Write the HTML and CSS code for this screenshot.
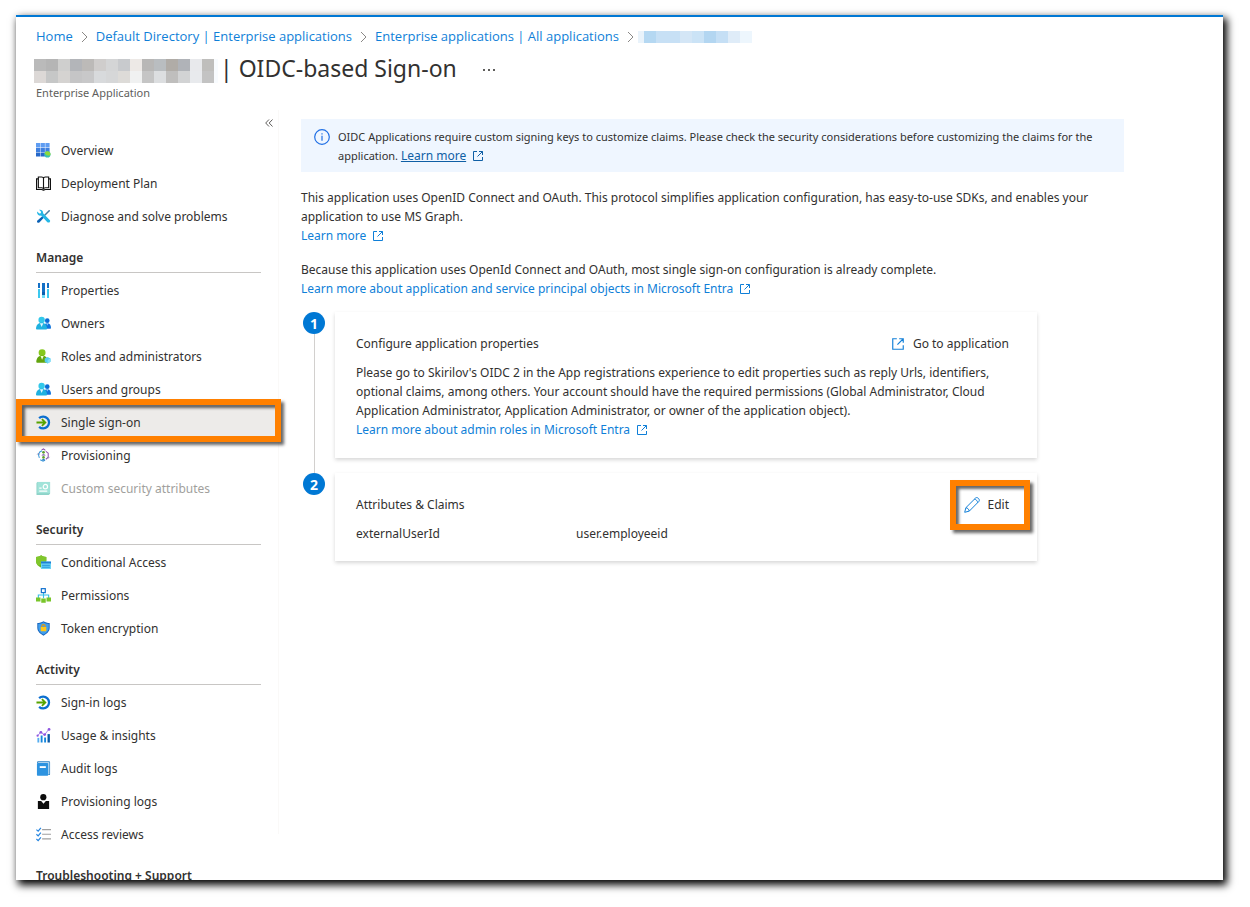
FILE: index.html
```html
<!DOCTYPE html>
<html lang="en">
<head>
  <meta charset="UTF-8">
  <meta name="viewport" content="width=device-width, initial-scale=1.0">
  <title>OIDC-based Sign-on</title>
  <link rel="stylesheet" href="styles.css">
</head>
<body>
  <!-- Shared icons -->
  <svg class="sprite" aria-hidden="true">
    <symbol id="icon-external" viewBox="0 0 12 12">
      <path d="M5 1.5H1.5v9h9V7M7 1.5h3.5V5M10.5 1.5L5.5 6.5" fill="none" stroke="currentColor"/>
    </symbol>
    <symbol id="icon-chevron" viewBox="0 0 7 12">
      <path d="M1 1l5 5-5 5" fill="none" stroke="currentColor"/>
    </symbol>
    <symbol id="icon-people" viewBox="0 0 16 16">
      <circle cx="12" cy="5" r="2.500" fill="#0a6cd6"/>
      <path d="M8 13.500c0-3.500 1.400-5.700 4-5.700s4 2.200 4 4.900c0 .5-.3.800-.8.800z" fill="#0f74de"/>
      <path d="M11 8l1 2.200L13 8z" fill="#9bd5ff"/>
      <circle cx="6" cy="4.200" r="3.400" fill="#32c8ea"/>
      <path d="M0 13.600C0 10 2.300 7.200 6 7.200s5.800 2.800 5.800 6.400c0 .5-.4.900-.9.900H.9c-.5 0-.9-.4-.9-.9z" fill="#1fb1e0"/>
      <path d="M4.200 7.600l1.800 4 1.800-4z" fill="#e2f8ff"/>
    </symbol>
    <symbol id="icon-signin" viewBox="0 0 16 16">
      <path d="M3.300 3.400A6.300 6.300 0 1 1 3.300 12.600" fill="none" stroke="#0b6fd0" stroke-width="2.400"/>
      <path d="M.5 8h9.500M6.300 4.300L10 8l-3.700 3.700" fill="none" stroke="#57a300" stroke-width="1.900"/>
    </symbol>
  </svg>

  <div class="window">
    <header class="header">
      <nav class="breadcrumb" aria-label="Breadcrumb">
        <a href="#">Home</a>
        <svg class="chevron"><use href="#icon-chevron"/></svg>
        <a href="#">Default Directory | Enterprise applications</a>
        <svg class="chevron"><use href="#icon-chevron"/></svg>
        <a href="#">Enterprise applications | All applications</a>
        <svg class="chevron"><use href="#icon-chevron"/></svg>
        <svg class="redacted-crumb" viewBox="0 0 114 12" shape-rendering="crispEdges">
          <rect width="6" height="12" fill="#e9f3fb"/>
          <rect x="6" width="12" height="12" fill="#b5d8f2"/>
          <rect x="18" width="24" height="12" fill="#c7e0f5"/>
          <rect x="42" width="12" height="12" fill="#d4e6f6"/>
          <rect x="54" width="12" height="12" fill="#cbe3f6"/>
          <rect x="66" width="12" height="12" fill="#b3d6f1"/>
          <rect x="78" width="12" height="12" fill="#c5dff5"/>
          <rect x="90" width="12" height="12" fill="#dfecf8"/>
          <rect x="102" width="12" height="12" fill="#edf6fd"/>
        </svg>
      </nav>
      <div class="title-row">
        <svg class="redacted-title" viewBox="0 0 184 24" shape-rendering="crispEdges">
          <g>
            <rect width="12" height="12" fill="#bababa"/>
            <rect x="12" width="12" height="12" fill="#b5b5b5"/>
            <rect x="24" width="12" height="12" fill="#cfcfce"/>
            <rect x="36" width="12" height="12" fill="#b3b5b9"/>
            <rect x="48" width="12" height="12" fill="#bcbab8"/>
            <rect x="60" width="12" height="12" fill="#cfcdcc"/>
            <rect x="72" width="12" height="12" fill="#d4d5d6"/>
            <rect x="84" width="12" height="12" fill="#c8cacd"/>
            <rect x="96" width="12" height="12" fill="#ede9e6"/>
            <rect x="108" width="12" height="12" fill="#b8b7b6"/>
            <rect x="120" width="12" height="12" fill="#b9bdc0"/>
            <rect x="132" width="12" height="12" fill="#b0aca7"/>
            <rect x="144" width="12" height="12" fill="#b0b3b8"/>
            <rect x="156" width="12" height="12" fill="#e8e9ec"/>
            <rect x="168" width="12" height="12" fill="#bfbebc"/>
          </g>
          <g>
            <rect y="12" width="12" height="12" fill="#dcd8d6"/>
            <rect x="12" y="12" width="12" height="12" fill="#c6c7c7"/>
            <rect x="24" y="12" width="12" height="12" fill="#d5d3d1"/>
            <rect x="36" y="12" width="12" height="12" fill="#c5c5c6"/>
            <rect x="48" y="12" width="12" height="12" fill="#c8c8c9"/>
            <rect x="60" y="12" width="12" height="12" fill="#d8dadc"/>
            <rect x="72" y="12" width="12" height="12" fill="#d6d7d8"/>
            <rect x="84" y="12" width="12" height="12" fill="#dddbd8"/>
            <rect x="96" y="12" width="12" height="12" fill="#f0f1f1"/>
            <rect x="108" y="12" width="12" height="12" fill="#c5c5c5"/>
            <rect x="120" y="12" width="12" height="12" fill="#dcdee0"/>
            <rect x="132" y="12" width="12" height="12" fill="#bfbebd"/>
            <rect x="144" y="12" width="12" height="12" fill="#d2d3d4"/>
            <rect x="156" y="12" width="12" height="12" fill="#e8eaed"/>
            <rect x="168" y="12" width="12" height="12" fill="#c3c3c3"/>
          </g>
          <rect x="180" width="4" height="24" fill="#f8fbfe"/>
        </svg>
        <h1 class="title">| OIDC-based Sign-on</h1>
        <button class="more" type="button" aria-label="More">
          <svg viewBox="0 0 12 2"><path d="M0 0h2v2H0zM5 0h2v2H5zM10 0h2v2h-2z" fill="#605e5c"/></svg>
        </button>
      </div>
      <p class="subtitle">Enterprise Application</p>
    </header>

    <div class="body">
      <!-- Side menu -->
      <aside class="sidebar">
        <button class="collapse" type="button" aria-label="Collapse menu">
          <svg viewBox="0 0 8 8"><path d="M4 .5L.7 4 4 7.500M7.500.5L4.200 4l3.300 3.500" fill="none" stroke="#605e5c"/></svg>
        </button>
        <ul class="menu">
          <li><a class="item" href="#">
            <svg class="icon" viewBox="0 0 16 16">
              <path d="M0 0h4.500v4.500H0zM5 0h4.500v4.500H5zM10 0h4.500v4.500H10z" fill="#5f9df2"/>
              <path d="M0 5h4.500v4.500H0zM5 5h4.500v4.500H5zM10 5h4.500v4.500H10z" fill="#3e80df"/>
              <path d="M0 10h4.500v4.500H0zM5 10h4.500v4.500H5z" fill="#2668c9"/>
              <circle cx="12.200" cy="12.200" r="3.300" fill="#37c2b1"/>
              <path d="M9.200 10.800c1.800 2.700 4 3.200 6.200 2 .4-2.500-1-4-3.200-4-1.400 0-2.400.7-3 2z" fill="#8fd93a"/>
            </svg>Overview</a></li>
          <li><a class="item" href="#">
            <svg class="icon" viewBox="0 0 16 16">
              <path d="M2.500 3H.6v11.400h5.200c1.300 0 1.700.6 2.200.6s.9-.6 2.200-.6h5.200V3h-1.900" fill="none" stroke="#111" stroke-width="1.200"/>
              <path d="M2.500 1H6c1.300 0 2 .6 2 1.500v11.500c0-.9-.7-1.500-2-1.500H2.500zM13.500 1H10c-1.300 0-2 .6-2 1.500v11.500c0-.9.7-1.500 2-1.500h3.500z" fill="none" stroke="#111" stroke-width="1.200"/>
            </svg>Deployment Plan</a></li>
          <li><a class="item" href="#">
            <svg class="icon" viewBox="0 0 16 16">
              <path d="M14.800 1.200l-1-.2L8.500 6.500l1 1L15 2.200z" fill="#4b7da0"/>
              <path d="M7.300 7.300l1.500 1.500-5.200 5.500c-.7.700-1.500.6-2.100 0s-.6-1.400 0-2z" fill="#0b61b5"/>
              <path d="M1.300 2.700l2.200 2.100 1.600-.4.300-1.500L3.300.9c2-.6 4.500.6 4.300 3.700l7 7c1.500 1.700-.8 3.900-2.500 2.400L5.400 7C3 7.500.6 5.600 1.300 2.700z" fill="#25b7e6"/>
            </svg>Diagnose and solve problems</a></li>
        </ul>

        <h2 class="group">Manage</h2>
        <ul class="menu">
          <li><a class="item" href="#">
            <svg class="icon" viewBox="0 0 15 15">
              <path d="M2 0h2v5H2zM6 0h3v9H6zM11 0h2v5h-2z" fill="#1470c6"/>
              <path d="M2 6h2v9H2zM11 6h2v9h-2z" fill="#3cc8ef"/>
              <path d="M6 9h3v3H6z" fill="#0b5fb0"/>
              <path d="M6 12h3v3H6z" fill="#6fdcf7"/>
            </svg>Properties</a></li>
          <li><a class="item" href="#"><svg class="icon"><use href="#icon-people"/></svg>Owners</a></li>
          <li><a class="item" href="#">
            <svg class="icon" viewBox="0 0 16 16">
              <circle cx="6.500" cy="4" r="3.700" fill="#85c81c"/>
              <path d="M.3 13.800C.3 10 2.800 7 6.500 7s6.200 3 6.200 6.800c0 .5-.4.900-.9.900H1.200c-.5 0-.9-.4-.9-.9z" fill="#62a40e"/>
              <path d="M4.800 7.400l1.700 4 1.700-4z" fill="#efffd5"/>
              <path d="M12.400 8.400l3.100 1.700v3.500l-3.100 1.800-3.100-1.800v-3.500z" fill="#56cdf0"/>
              <path d="M12.400 11.800l3.100-1.700v3.500l-3.100 1.800z" fill="#86e1f8"/>
            </svg>Roles and administrators</a></li>
          <li><a class="item" href="#"><svg class="icon"><use href="#icon-people"/></svg>Users and groups</a></li>
          <li class="highlighted"><a class="item selected" href="#" aria-current="page"><svg class="icon"><use href="#icon-signin"/></svg>Single sign-on</a></li>
          <li><a class="item" href="#">
            <svg class="icon" viewBox="0 0 16 16">
              <path d="M6.500 3L4 4.200 2.600 7l1 3.500M4.500 12.500l3 1.500 2-1" fill="none" stroke="#3f9bdc" stroke-width="1.100"/>
              <path d="M6 2l2-1 2 1.500M10.500 3.500l2.500 2V10l-2.500 2" fill="none" stroke="#8b4fb0" stroke-width="1.100"/>
              <circle cx="8" cy="4.600" r="1.400" fill="#5c9e2e"/>
              <path d="M5.800 8c1-1.700 3.400-1.700 4.400 0z" fill="#6b4ba0"/>
              <circle cx="8" cy="10" r="1.400" fill="#5c9e2e"/>
              <path d="M6 13.200c.8-1.900 3.200-1.900 4 0z" fill="#2f7fc8"/>
              <path d="M1.300 7l1.200-1.500L3.800 7M11.700 9.500l1.300 1.500 1.300-1.500" fill="none" stroke="#7e7fae" stroke-width=".8"/>
            </svg>Provisioning</a></li>
          <li><a class="item disabled" href="#" aria-disabled="true">
            <svg class="icon" viewBox="0 0 16 16">
              <path d="M1.500 1H15v12.500L13.500 15H.5V2z" fill="#1fa994"/>
              <path d="M1.500 1H15v12H1.500z" fill="#46c9b4"/>
              <circle cx="10" cy="6" r="2.300" fill="none" stroke="#fff" stroke-width="1.300"/>
              <path d="M3.500 7h2.500v1.300H3.500zM3.500 10h8.500v1.500H3.500z" fill="#fff"/>
            </svg>Custom security attributes</a></li>
        </ul>

        <h2 class="group">Security</h2>
        <ul class="menu">
          <li><a class="item" href="#">
            <svg class="icon" viewBox="0 0 16 16">
              <path d="M5.500.3C7 1.500 9 2 11 2v4c0 3.800-3 6.200-5.500 7.300C3 12.200 0 9.800 0 6V2c2 0 4-.5 5.500-1.700z" fill="#66b21c"/>
              <path d="M5.500.3C7 1.500 9 2 11 2v4L2.600 11.600C1 10.200 0 8.300 0 6V2c2 0 4-.5 5.500-1.700z" fill="#80c62c"/>
              <rect x="5.300" y="7" width="10.700" height="8" rx=".6" fill="#69d2f5"/>
              <path d="M5.300 7H16v2H5.300z" fill="#1d7fd6"/>
              <path d="M6.500 11h8.300M6.500 13h8.300" stroke="#2191dc"/>
            </svg>Conditional Access</a></li>
          <li><a class="item" href="#">
            <svg class="icon" viewBox="0 0 16 16">
              <path d="M8 5v6M2.500 11V7.500h11V11" fill="none" stroke="#37bfe8" stroke-width="1.200"/>
              <rect x="5.700" y=".7" width="4.200" height="4.200" fill="#fff" stroke="#1372cf" stroke-width="1.300"/>
              <path d="M0 10h4.800v4.300H0zM5.600 11.200h4.800v4.600H5.600zM11.200 10H16v4.300h-4.800z" fill="#79c52a"/>
            </svg>Permissions</a></li>
          <li><a class="item" href="#">
            <svg class="icon" viewBox="0 0 16 16">
              <path d="M8 .3c2 1.300 4.300 1.900 6.600 1.900v5c0 4.200-3.700 6.900-6.600 8.400-2.900-1.500-6.600-4.200-6.600-8.400v-5C3.700 2.200 6 1.600 8 .3z" fill="#1664bd"/>
              <path d="M8 1.400c1.800 1.100 3.700 1.600 5.600 1.700v4.100c0 3.600-3 5.900-5.600 7.200-2.600-1.300-5.600-3.600-5.600-7.200V3.100C4.300 3 6.200 2.500 8 1.400z" fill="#409fed"/>
              <path d="M6.200 7V5.600a1.800 1.800 0 0 1 3.600 0V7" fill="none" stroke="#e99a05" stroke-width="1.200"/>
              <rect x="5" y="6.500" width="6" height="4.500" rx=".5" fill="#ffc719"/>
            </svg>Token encryption</a></li>
        </ul>

        <h2 class="group">Activity</h2>
        <ul class="menu">
          <li><a class="item" href="#"><svg class="icon"><use href="#icon-signin"/></svg>Sign-in logs</a></li>
          <li><a class="item" href="#">
            <svg class="icon" viewBox="0 0 16 16">
              <path d="M1.500 10.500h2V15.500h-2z" fill="#56aef0"/>
              <path d="M5 8h2v7.500H5zM8.700 10h2v5.500h-2z" fill="#1686dc"/>
              <path d="M12.300 6.500h2.500v9h-2.500z" fill="#0a5aa6"/>
              <path d="M1.500 8.500l3.500-4 4 3 4.500-6" fill="none" stroke="#a77bea" stroke-width="1"/>
              <g fill="#9057e0"><circle cx="1.700" cy="8.200" r="1.200"/><circle cx="5.200" cy="4.600" r="1.500"/><circle cx="9.200" cy="7" r="1.500"/><circle cx="13.900" cy="1.500" r="1.500"/></g>
            </svg>Usage &amp; insights</a></li>
          <li><a class="item" href="#">
            <svg class="icon" viewBox="0 0 16 16">
              <path d="M2 .3h12c.6 0 1 .4 1 1V14c0 .6-.4 1-1 1h-1V2H1.200C1.200.8 1.500.3 2 .3z" fill="#2b80c4"/>
              <path d="M2.500 1.200h11.700V14H13V2H2z" fill="#d7ecfb"/>
              <rect x="1" y="2" width="12" height="13.700" rx=".8" fill="#2d93e0"/>
              <path d="M4 5.500h6.500v2H4z" fill="#fff"/>
            </svg>Audit logs</a></li>
          <li><a class="item" href="#">
            <svg class="icon" viewBox="0 0 16 16">
              <circle cx="7.800" cy="3.400" r="3.300" fill="#0c0c0c"/>
              <path d="M2 7.500h3.500L8 10.500l2.500-3H14V16H2z" fill="#0c0c0c"/>
            </svg>Provisioning logs</a></li>
          <li><a class="item" href="#">
            <svg class="icon" viewBox="0 0 16 16">
              <path d="M.4 2.800l1.900 1.700L5.200 1M.4 7.800l1.900 1.700L5.200 6M.4 12.800l1.900 1.700L5.200 11" fill="none" stroke="#2585e0" stroke-width="1.300"/>
              <path d="M6.500 2.800H16M6.500 7.700H16M6.500 12.600H16" stroke="#a0a0a0" stroke-width="1.200"/>
            </svg>Access reviews</a></li>
        </ul>

        <h2 class="group">Troubleshooting + Support</h2>
      </aside>

      <!-- Page content -->
      <main class="content">
        <div class="notice">
          <svg class="info" viewBox="0 0 16 16">
            <circle cx="8" cy="8" r="7.300" fill="none" stroke="#1f6fe5" stroke-width="1.200"/>
            <path d="M7.400 6.800h1.200v5H7.400zM7.400 4.200h1.200v1.400H7.400z" fill="#1f6fe5"/>
          </svg>
          <p>OIDC Applications require custom signing keys to customize claims. Please check the security considerations before customizing the claims for the application. <a class="notice-link" href="#">Learn more<svg class="external"><use href="#icon-external"/></svg></a></p>
        </div>

        <div class="text">
          <p>This application uses OpenID Connect and OAuth. This protocol simplifies application configuration, has easy-to-use SDKs, and enables your application to use MS Graph.</p>
          <a class="link" href="#">Learn more<svg class="external"><use href="#icon-external"/></svg></a>
        </div>
        <div class="text">
          <p>Because this application uses OpenId Connect and OAuth, most single sign-on configuration is already complete.</p>
          <a class="link" href="#">Learn more about application and service principal objects in Microsoft Entra<svg class="external"><use href="#icon-external"/></svg></a>
        </div>

        <ol class="steps">
          <li class="step">
            <div class="marker"><span class="number">1</span></div>
            <section class="card">
              <div class="card-header">
                <h3>Configure application properties</h3>
                <button class="action" type="button"><svg class="action-icon"><use href="#icon-external"/></svg>Go to application</button>
              </div>
              <p>Please go to Skirilov's OIDC 2 in the App registrations experience to edit properties such as reply Urls, identifiers, optional claims, among others. Your account should have the required permissions (Global Administrator, Cloud Application Administrator, Application Administrator, or owner of the application object).</p>
              <a class="link" href="#">Learn more about admin roles in Microsoft Entra<svg class="external"><use href="#icon-external"/></svg></a>
            </section>
          </li>
          <li class="step">
            <div class="marker"><span class="number">2</span></div>
            <section class="card">
              <div class="card-header">
                <h3>Attributes &amp; Claims</h3>
                <button class="action edit" type="button"><svg class="pencil" viewBox="0 0 16 16">
                  <path d="M.7 15.300l1.200-4.600L11.600 1c1.800-1.500 4.800 1.500 3.300 3.400L5.300 14.100zM1.900 10.700c1.700.2 3.100 1.700 3.400 3.400M10.400 2.200c1.700.2 3.100 1.700 3.300 3.400" fill="none" stroke="#1480d8"/>
                </svg>Edit</button>
              </div>
              <dl class="claims">
                <dt>externalUserId</dt>
                <dd>user.employeeid</dd>
              </dl>
            </section>
          </li>
        </ol>
      </main>
    </div>
  </div>
</body>
</html>
```

FILE: styles.css
```css
* {
  box-sizing: border-box;
}

body {
  margin: 0;
  height: 100vh;
  padding: 15px 27px 27px 16px;
  overflow: hidden;
  background: #fff;
  color: #323130;
  font-family: "Noto Sans", "Open Sans", sans-serif;
  font-size: 12px;
  line-height: 19px;
}

h1, h2, h3, p, ul, ol, dl, dd {
  margin: 0;
  padding: 0;
}

ul, ol {
  list-style: none;
}

a {
  color: #0f7fd8;
  text-decoration: none;
}

button {
  padding: 0;
  border: 0;
  background: none;
  color: inherit;
  font: inherit;
}

svg {
  flex-shrink: 0;
}

.sprite {
  display: none;
}

.window {
  height: 100%;
  overflow: hidden;
  border-top: 2px solid #0078d4;
  background: #fff;
  box-shadow: 3px 4px 8px 1px #000;
}

/* Header */
.header {
  height: 93px;
  padding: 10px 20px 0;
}

.breadcrumb {
  display: flex;
  align-items: center;
  gap: 8px;
  font-family: "Open Sans", "Noto Sans", sans-serif;
  font-size: 13px;
}

.chevron {
  width: 7px;
  height: 12px;
  color: #8a8886;
}

.redacted-crumb {
  width: 114px;
  height: 12px;
  margin-left: -4px;
}

.title-row {
  display: flex;
  align-items: center;
  height: 50px;
  margin-left: -2px;
}

.redacted-title {
  width: 184px;
  height: 24px;
}

.title {
  margin-left: 2px;
  padding-bottom: 6px;
  font-size: 23px;
  font-weight: 400;
  line-height: 30px;
}

.more {
  display: flex;
  margin-left: 26px;
  padding-bottom: 3px;
}

.more svg {
  width: 12px;
  height: 2px;
}

.subtitle {
  margin-top: -13px;
  color: #605e5c;
  font-size: 11px;
}

/* Side menu */
.body {
  display: flex;
}

.sidebar {
  flex: none;
  width: 263px;
  height: 724px;
  border-right: 1px solid #faf9f8;
}

.collapse {
  display: flex;
  align-items: center;
  justify-content: flex-end;
  width: 257px;
  height: 24px;
  padding-top: 2px;
}

.collapse svg {
  width: 8px;
  height: 8px;
}

.item {
  display: flex;
  align-items: center;
  gap: 10px;
  height: 33px;
  padding-left: 20px;
  color: #323130;
}

.icon {
  width: 15px;
  height: 15px;
}

.selected {
  background: #edebe9;
}

.disabled {
  color: #a19f9d;
}

.disabled .icon {
  opacity: 0.5;
}

.group {
  height: 40px;
  margin: 0 17px 1px 20px;
  padding-top: 15px;
  border-bottom: 1px solid #c8c6c4;
  font-size: 12px;
  font-weight: 600;
}

/* Orange frames */
.highlighted,
.edit {
  position: relative;
}

.highlighted::after,
.edit::after {
  content: '';
  position: absolute;
  border: 6px solid #ff8000;
  box-shadow: 3px 3px 3px rgba(0, 0, 0, 0.6), inset 3px 3px 3px rgba(0, 0, 0, 0.6);
  pointer-events: none;
}

.highlighted::after {
  inset: -7px -3px -3px 0;
}

.edit::after {
  inset: -15px -21px -16px -14px;
}

/* Content */
.content {
  flex: 1;
  padding: 9px 20px 0 22px;
}

.notice {
  display: flex;
  gap: 8px;
  max-width: 823px;
  padding: 8px 12px 7px 13px;
  background: #eff6ff;
  font-size: 11px;
}

.notice .info {
  width: 16px;
  height: 16px;
  margin-top: 2px;
}

.notice-link {
  color: #0f5fa5;
  font-size: 12px;
  text-decoration: underline;
}

.external {
  width: 12px;
  height: 12px;
  margin-left: 6px;
  vertical-align: -2px;
}

.text {
  max-width: 823px;
  margin-top: 14px;
}

.notice + .text {
  margin-top: 16px;
}

.link {
  display: block;
  line-height: 20px;
}

.steps {
  max-width: 736px;
  margin-top: 13px;
  padding-left: 2px;
}

.step {
  display: flex;
  gap: 10px;
}

.marker {
  display: flex;
  flex-direction: column;
  align-items: center;
}

.step:not(:last-child) .marker::after {
  content: '';
  flex: 1;
  width: 1px;
  background: #d2d0ce;
}

.number {
  width: 22px;
  height: 22px;
  border-radius: 50%;
  background: #0078d4;
  color: #fff;
  font-size: 14px;
  font-weight: 700;
  line-height: 24px;
  text-align: center;
}

.card {
  flex: 1;
  padding: 22px 21px 18px;
  box-shadow: 0 2px 4px rgba(0, 0, 0, 0.16);
}

.step:not(:last-child) .card {
  margin-bottom: 15px;
}

.card-header {
  display: flex;
  align-items: center;
  justify-content: space-between;
  margin-bottom: 10px;
  padding-right: 7px;
}

.card-header h3 {
  font-size: 12px;
  font-weight: 400;
}

.action {
  display: flex;
  align-items: center;
  gap: 8px;
}

.action-icon {
  width: 14px;
  height: 14px;
  color: #1480d8;
}

.pencil {
  width: 16px;
  height: 16px;
}

.claims {
  display: grid;
  grid-template-columns: 220px 1fr;
}
```
